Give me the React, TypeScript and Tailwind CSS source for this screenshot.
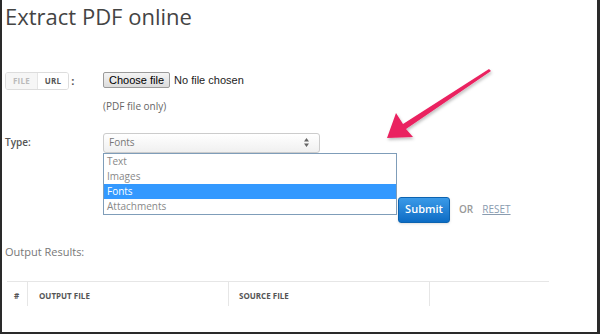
import { FC } from 'react';

// Native-looking dropdown popup shown under the "Type" select
const TypeList: FC = () => {
  const options = ['Text', 'Images', 'Fonts', 'Attachments'];
  return (
    <div className="absolute left-0 top-[20px] z-10 w-[294px] border border-[#7f9db9] bg-white">
      {options.map((o) => (
        <div
          key={o}
          className={`h-[15px] pl-[3px] text-[10px] leading-[15px] ${o === 'Fonts' ? 'bg-[#3399ff] text-white' : 'text-[#888]'}`}
        >
          {o}
        </div>
      ))}
    </div>
  );
};

const Arrow: FC = () => (
  <svg className="absolute left-0 top-0 pointer-events-none" width="600" height="334" viewBox="0 0 600 334">
    <defs>
      <filter id="sh" x="-20%" y="-20%" width="140%" height="140%">
        <feDropShadow dx="1" dy="2" stdDeviation="1.5" floodColor="#000" floodOpacity="0.25" />
      </filter>
    </defs>
    <polygon
      points="385,138 411,137 404,129 489,71 487,69 401,124 394,113"
      fill="#ea2260"
      filter="url(#sh)"
    />
  </svg>
);

export default function App() {
  return (
    <div
      className="relative h-[334px] w-[600px] overflow-hidden border-b-2 border-l-2 border-r-[3px] border-[#2a2a2a] bg-white text-[#555]"
      style={{ fontFamily: '"Open Sans", "Noto Sans", sans-serif' }}
    >
      <div className="pl-[3px]">
        <h1 className="pt-[1px] text-[22px] font-normal leading-[30px] text-[#444]">Extract PDF online</h1>

        {/* Source row */}
        <div className="mt-[41px] flex items-start">
          <div className="flex w-[98px] items-center">
            <div className="flex h-[18px] overflow-hidden rounded-[3px] border border-[#ddd] text-[8px] font-bold tracking-wide">
              <span className="flex items-center bg-[#f6f6f6] px-[7px] text-[#bbb]">FILE</span>
              <span className="flex items-center border-l border-[#e5e5e5] bg-white px-[7px] text-[#555]">URL</span>
            </div>
            <span className="ml-[2px] text-[11px] font-bold text-[#555]">:</span>
          </div>
          <div className="flex flex-col">
            <div className="flex items-center" style={{ fontFamily: '"Liberation Sans", Arial, sans-serif' }}>
              <button className="h-[16px] rounded-[2px] border border-[#9a9a9a] bg-gradient-to-b from-[#f4f4f4] to-[#dcdcdc] px-[5px] text-[11px] leading-[14px] text-black">
                Choose file
              </button>
              <span className="ml-[4px] text-[11px] text-[#222]">No file chosen</span>
            </div>
            <div className="mt-[11px] text-[10px] leading-[12px] text-[#666]">(PDF file only)</div>
          </div>
        </div>

        {/* Type row */}
        <div className="mt-[21px] flex items-start">
          <div className="w-[98px] pt-[2px] text-[10px] font-semibold text-[#555]">Type:</div>
          <div className="relative">
            <div className="flex h-[20px] w-[217px] items-center justify-between rounded-[3px] border border-[#ccc] bg-gradient-to-b from-white to-[#f0f0f0] pl-[5px] pr-[10px] text-[10px] text-[#777]">
              <span>Fonts</span>
              <svg width="5" height="9" viewBox="0 0 5 9">
                <path d="M2.5 0 L5 3.5 H0 Z M2.5 9 L5 5.5 H0 Z" fill="#666" />
              </svg>
            </div>
            <TypeList />
          </div>
        </div>

        {/* Submit row */}
        <div className="mt-[44px] flex items-center">
          <button className="ml-[393px] h-[26px] w-[52px] rounded-[3px] border border-[#0c63b0] bg-gradient-to-b from-[#3a9ae8] to-[#0b6cc4] text-[11px] font-semibold text-white shadow-sm">
            Submit
          </button>
          <span className="ml-[9px] text-[10px] font-semibold text-[#999]">OR</span>
          <span className="ml-[9px] text-[10px] text-[#8a9cb0] underline">RESET</span>
        </div>

        <div className="mt-[21px] text-[11px] text-[#777]">Output Results:</div>

        {/* Results table header */}
        <div className="ml-[2px] mt-[21px] w-[542px] border-t border-[#e6e6e6]">
          <div className="flex h-[24px] items-center text-[8px] font-bold text-[#555]">
            <div className="flex h-full w-[20px] items-start pl-[7px] pt-[8px]">#</div>
            <div className="h-full w-[201px] border-l border-[#e6e6e6] pl-[11px] pt-[8px]">OUTPUT FILE</div>
            <div className="h-full w-[201px] border-l border-[#e6e6e6] pl-[10px] pt-[8px]">SOURCE FILE</div>
            <div className="h-full flex-1 border-l border-[#e6e6e6]" />
          </div>
        </div>
      </div>
      <Arrow />
    </div>
  );
}
